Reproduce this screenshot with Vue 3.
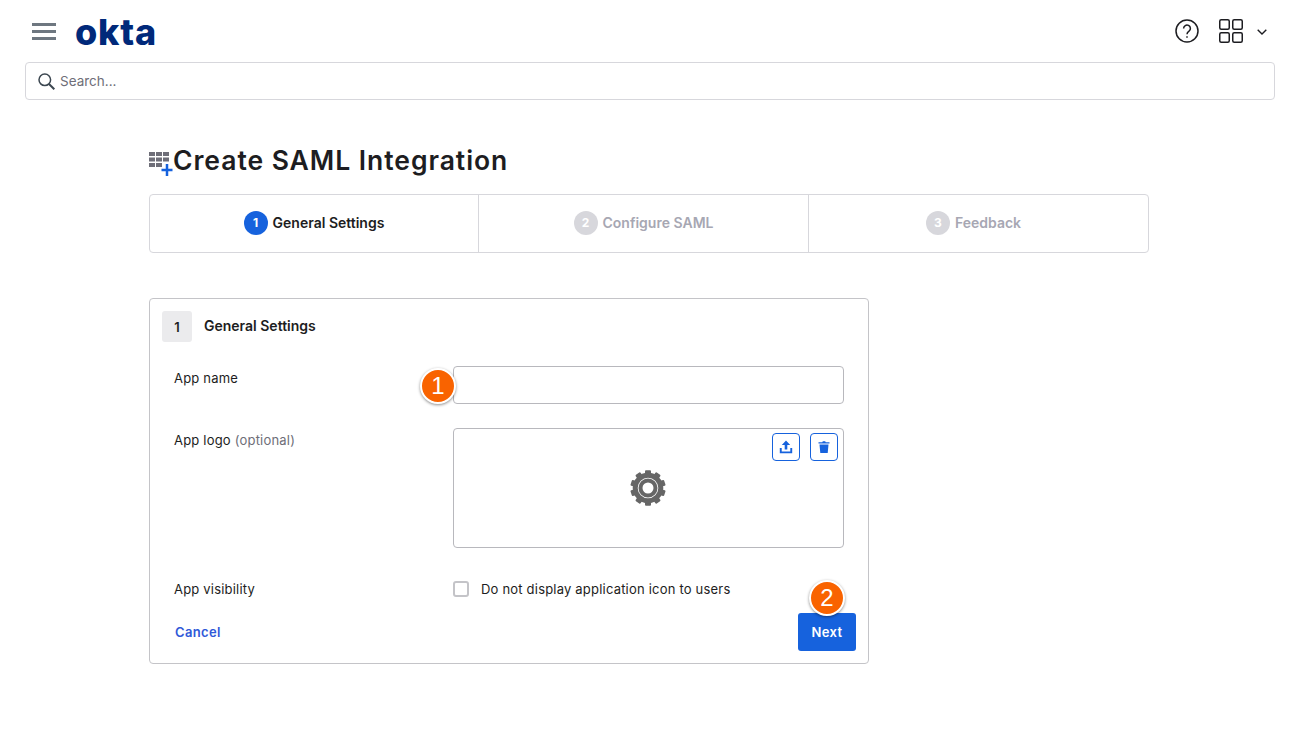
<script setup>
const steps = [
  { n: 1, label: 'General Settings', active: true },
  { n: 2, label: 'Configure SAML', active: false },
  { n: 3, label: 'Feedback', active: false },
]
const gearTeeth = [0, 36, 72, 108, 144, 180, 216, 252, 288, 324]
</script>

<template>
  <div class="page">
    <header class="topbar">
      <div class="brand">
        <svg class="burger" width="24" height="17" viewBox="0 0 24 17"><path d="M0 1.5h24M0 8.5h24M0 15.5h24" stroke="#6e7780" stroke-width="3" fill="none"/></svg>
        <span class="logo">okta</span>
      </div>
      <div class="tools">
        <svg width="24" height="24" viewBox="0 0 24 24" fill="none" stroke="#1d1d21" stroke-width="1.5"><circle cx="12" cy="12" r="11"/><path d="M8.6 9.4a3.4 3.4 0 1 1 5.4 2.8c-1.3.9-2 1.500-2 3"/><path d="M12 17.200v1.600"/></svg>
        <svg class="grid" width="24" height="24" viewBox="0 0 24 24" fill="none" stroke="#1d1d21" stroke-width="1.500"><rect x=".75" y=".75" width="9.500" height="9.500" rx="1.500"/><rect x="13.750" y=".75" width="9.500" height="9.500" rx="1.500"/><rect x=".75" y="13.750" width="9.500" height="9.500" rx="1.500"/><rect x="13.750" y="13.750" width="9.500" height="9.500" rx="1.500"/></svg>
        <svg class="chev" width="10" height="6" viewBox="0 0 10 6" fill="none" stroke="#1d1d21" stroke-width="1.400"><path d="M.7.8 5 5l4.300-4.200"/></svg>
      </div>
    </header>

    <div class="search">
      <svg width="17" height="17" viewBox="0 0 17 17" fill="none" stroke="#3b4650" stroke-width="1.500"><circle cx="6.800" cy="6.800" r="5.800"/><path d="m11 11 5.300 5.300" stroke-width="2"/></svg>
      <span>Search...</span>
    </div>

    <main class="content">
      <div class="title-row">
        <svg class="title-icon" width="24" height="24" viewBox="0 0 24 24">
          <g fill="#6e6e78">
            <rect x="0" y="0" width="6" height="4"/><rect x="7" y="0" width="6" height="4"/><rect x="14" y="0" width="6" height="4"/>
            <rect x="0" y="5.500" width="6" height="4"/><rect x="7" y="5.500" width="6" height="4"/><rect x="14" y="5.500" width="6" height="4"/>
            <rect x="0" y="11" width="6" height="4"/><rect x="7" y="11" width="6" height="4"/>
          </g>
          <path d="M18 12v12M12.500 18h11" stroke="#1662dd" stroke-width="2.500"/>
        </svg>
        <h1>Create SAML Integration</h1>
      </div>

      <ol class="wizard">
        <li v-for="s in steps" :key="s.n" :class="{ on: s.active }">
          <span class="dot">{{ s.n }}</span>
          <span>{{ s.label }}</span>
        </li>
      </ol>

      <section class="card">
        <div class="card-head">
          <span class="num">1</span>
          <h2>General Settings</h2>
        </div>

        <div class="row row-name">
          <label>App name</label>
          <div class="control">
            <span class="marker m1">1</span>
            <div class="input"></div>
          </div>
        </div>

        <div class="row row-logo">
          <label>App logo <em>(optional)</em></label>
          <div class="control">
            <div class="logo-box">
              <div class="logo-actions">
                <span class="icon-btn">
                  <svg width="14" height="14" viewBox="0 0 14 14" fill="#1662dd"><path d="M7 .5 11.200 5H8.300v4.500H5.700V5H2.800z"/><path d="M.8 8h1.900v3.400h8.600V8h1.900v5.300H.8z"/></svg>
                </span>
                <span class="icon-btn">
                  <svg width="14" height="14" viewBox="0 0 14 14" fill="#1662dd"><path d="M1.500 2.200h3.800l.5-1h2.400l.5 1h3.800v1.300h-11z"/><path d="M2.500 4.400h9l-.8 8.600H3.300z"/></svg>
                </span>
              </div>
              <svg class="gear" width="36" height="36" viewBox="0 0 36 36">
                <rect v-for="a in gearTeeth" :key="a" x="15" y="0.300" width="6" height="5" rx="1" fill="#666" :transform="`rotate(${a} 18 18)`"/>
                <circle cx="18" cy="18" r="12.800" fill="none" stroke="#666" stroke-width="5"/>
                <circle cx="18" cy="18" r="7.500" fill="none" stroke="#666" stroke-width="4"/>
              </svg>
            </div>
          </div>
        </div>

        <div class="row row-vis">
          <label>App visibility</label>
          <div class="control check">
            <span class="box"></span>
            <span>Do not display application icon to users</span>
          </div>
        </div>

        <div class="actions">
          <a class="cancel">Cancel</a>
          <button class="next" type="button">
            <span class="marker m2">2</span>
            Next
          </button>
        </div>
      </section>
    </main>
  </div>
</template>

<style>
html, body { background: #fff; }
</style>

<style scoped>
.page {
  width: 1299px;
  height: 731px;
  overflow: hidden;
  background: #fff;
  color: #1d1d21;
  font-family: Inter, "Liberation Sans", sans-serif;
  font-size: 13px;
  letter-spacing: 0.2px;
}
.topbar {
  height: 62px;
  padding: 0 32px;
  display: flex;
  align-items: center;
  justify-content: space-between;
  box-sizing: border-box;
}
.brand { display: flex; align-items: center; gap: 19px; }
.logo {
  font-family: Inter, sans-serif;
  font-weight: 800;
  font-size: 36px;
  line-height: 36px;
  color: #00297a;
  letter-spacing: 0.8px;
  margin-top: 1px;
}
.tools { display: flex; align-items: center; }
.grid { margin-left: 20px; }
.chev { margin-left: 14px; margin-top: 2px; }
.search {
  margin: 0 24px 0 25px;
  height: 38px;
  box-sizing: border-box;
  border: 1px solid #d7d7dc;
  border-radius: 4px;
  display: flex;
  align-items: center;
  gap: 5px;
  padding-left: 12px;
  color: #6e6e78;
  font-size: 13.500px;
  letter-spacing: 0;
}
.content { margin: 0 0 0 149px; width: 1000px; }
.title-row { display: flex; align-items: flex-start; margin-top: 52px; height: 42px; }
.title-icon { flex: none; }
h1 {
  margin: 0;
  font-size: 26.500px;
  line-height: 17px;
  font-weight: 600;
  letter-spacing: 0.95px;
}
.wizard {
  list-style: none;
  margin: 0;
  padding: 0;
  height: 59px;
  box-sizing: border-box;
  border: 1px solid #d7d7dc;
  border-radius: 4px;
  display: grid;
  grid-template-columns: 328px 330px 1fr;
}
.wizard li {
  display: flex;
  align-items: center;
  justify-content: center;
  gap: 5px;
  color: #a7a7b3;
  font-weight: 600;
  font-size: 14px;
  letter-spacing: 0;
  padding-bottom: 2px;
  box-sizing: border-box;
}
.wizard li + li { border-left: 1px solid #d7d7dc; }
.wizard li:last-child { padding-right: 10px; }
.wizard li.on { color: #1d1d21; }
.dot {
  width: 24px;
  height: 24px;
  border-radius: 50%;
  background: #d7d7dc;
  color: #fff;
  display: flex;
  align-items: center;
  justify-content: center;
  font-size: 12px;
  font-weight: 700;
}
.on .dot { background: #1662dd; }
.card {
  margin-top: 45px;
  width: 720px;
  height: 366px;
  box-sizing: border-box;
  border: 1px solid #c4c4c8;
  border-radius: 4px;
  padding: 12px;
  display: flex;
  flex-direction: column;
}
.card-head { display: flex; align-items: center; gap: 12px; height: 31px; }
.num {
  width: 30px;
  height: 31px;
  border-radius: 3px;
  background: #ebebed;
  display: flex;
  align-items: center;
  justify-content: center;
  font-weight: 600;
  font-size: 13px;
}
h2 {
  margin: 0 0 2px;
  font-size: 14px;
  font-weight: 600;
  letter-spacing: 0;
}
.row { display: flex; padding-left: 12px; }
.row label { width: 279px; flex: none; line-height: 18px; }
.row em { font-style: normal; color: #6e6e78; }
.control { position: relative; width: 391px; }
.row-name { margin-top: 24px; }
.row-name label { padding-top: 3px; }
.input {
  height: 38px;
  box-sizing: border-box;
  border: 1px solid #b8b8bd;
  border-radius: 4px;
}
.row-logo { margin-top: 24px; }
.row-logo label { padding-top: 3px; }
.logo-box {
  height: 120px;
  box-sizing: border-box;
  border: 1px solid #b8b8bd;
  border-radius: 4px;
  position: relative;
  display: flex;
  align-items: center;
  justify-content: center;
}
.logo-actions {
  position: absolute;
  top: 4px;
  right: 5px;
  display: flex;
  gap: 10px;
}
.icon-btn {
  width: 28px;
  height: 28px;
  box-sizing: border-box;
  border: 1px solid #1662dd;
  border-radius: 4px;
  display: flex;
  align-items: center;
  justify-content: center;
}
.gear { display: block; margin-right: 2px; }
.row-vis { margin-top: 33px; height: 16px; }
.row-vis label { line-height: 16px; }
.check { display: flex; align-items: center; gap: 12px; }
.box {
  width: 16px;
  height: 16px;
  box-sizing: border-box;
  border: 2px solid #c4c4c8;
  border-radius: 3px;
}
.actions {
  margin-top: 16px;
  display: flex;
  align-items: center;
  justify-content: space-between;
  padding-left: 13px;
}
.cancel { color: #3059d8; font-weight: 600; font-size: 13px; letter-spacing: .35px; }
.next {
  position: relative;
  width: 58px;
  height: 38px;
  border: 0;
  border-radius: 3px;
  background: #1662dd;
  color: #fff;
  font: 600 13px Inter, "Liberation Sans", sans-serif;
  letter-spacing: .35px;
  padding: 0;
}
.marker {
  position: absolute;
  width: 32px;
  height: 32px;
  box-sizing: content-box;
  border: 2px solid #fff;
  border-radius: 50%;
  background: #f96300;
  color: #fff;
  box-shadow: 0 1px 3px rgba(0, 0, 0, .45);
  display: flex;
  align-items: center;
  justify-content: center;
  font: 400 24px "Liberation Sans", sans-serif;
  letter-spacing: 0;
  z-index: 2;
}
.m1 { left: -33px; top: 2px; }
.m2 { left: 11px; top: -33px; }
</style>
